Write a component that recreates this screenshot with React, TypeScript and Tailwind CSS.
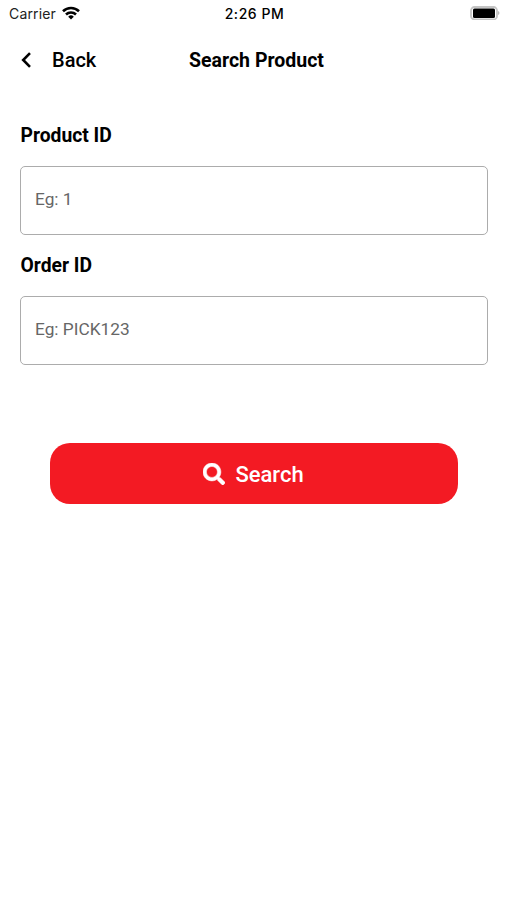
import { FaSearch } from 'react-icons/fa';

interface FieldProps {
  id: string;
  label: string;
  placeholder: string;
}

function StatusBar() {
  return (
    <div className="grid h-[27px] grid-cols-3 items-center pl-[9px] pr-[7px] font-['Inter',sans-serif] text-[14px]">
      <div className="flex items-center gap-1.5">
        <span className="tracking-[0.15px] text-[#222]">Carrier</span>
        <svg viewBox="0 0 18 14" className="mb-0.5 h-3.5 w-[18px]" fill="none" stroke="black" strokeWidth="2.6">
          <path d="M1 5.2a11.6 11.6 0 0 1 16 0" />
          <path d="M4 8.5a7.2 7.2 0 0 1 10 0" />
          <path d="M9 13.5 6.2 10.7a4 4 0 0 1 5.6 0z" fill="black" stroke="none" />
        </svg>
      </div>
      <span className="whitespace-nowrap text-center font-medium tracking-[0.55px]">2:26 PM</span>
      <svg viewBox="0 0 30 14" className="mb-0.5 h-3.5 w-[30px] justify-self-end">
        <rect x="1" y="1" width="26" height="12.5" rx="3.5" fill="white" stroke="#c4c4c4" strokeWidth="1.8" />
        <rect x="3" y="2.5" width="22" height="9.5" rx="1.5" />
        <path d="M28 5v4q1.5-.6 1.5-2T28 5z" fill="#bbb" />
      </svg>
    </div>
  );
}

function Field({ id, label, placeholder }: FieldProps) {
  return (
    <div className="flex flex-col">
      <label htmlFor={id} className="pl-[0.5px] text-[19.3px] leading-6 font-bold">
        {label}
      </label>
      <input
        id={id}
        placeholder={placeholder}
        className="mt-[18px] h-[69px] rounded-[5px] border border-[#acacac] px-[14px] pb-1 text-[17.3px] placeholder:text-[#666]"
      />
    </div>
  );
}

export default function App() {
  return (
    <div className="h-[900px] w-[507px] bg-white font-['Roboto',sans-serif] text-black">
      <StatusBar />
      <header className="grid h-[66px] grid-cols-3 items-center px-5">
        <button className="flex items-center gap-5 text-[20px] font-medium">
          <svg viewBox="0 0 12 16" className="h-4 w-3" fill="none" stroke="black" strokeWidth="2.6">
            <path d="M10 1.2 3.2 8l6.8 6.8" />
          </svg>
          Back
        </button>
        <h1 className="pt-0.5 pl-1.5 text-center text-[19.5px] font-bold whitespace-nowrap">Search Product</h1>
      </header>
      <main className="flex flex-col gap-[19px] pr-[19.5px] pl-5 pt-[31px]">
        <Field id="product" label="Product ID" placeholder="Eg: 1" />
        <Field id="order" label="Order ID" placeholder="Eg: PICK123" />
        <button className="mr-[30px] ml-[29.5px] mt-[59px] flex h-[61px] items-center justify-center gap-2.5 rounded-[20px] bg-[#f31a23] pt-px text-[22px] font-medium text-white">
          <FaSearch className="size-[22px]" stroke="white" strokeWidth="12" />
          Search
        </button>
      </main>
    </div>
  );
}
